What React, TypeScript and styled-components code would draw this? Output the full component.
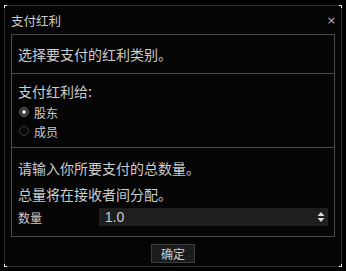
import React from "react";
import styled, { createGlobalStyle } from "styled-components";

const Global = createGlobalStyle`
  html, body { margin: 0; padding: 0; background: #000; }
  body { font-family: "Noto Sans CJK SC", "Noto Sans", sans-serif; color: #cfcfcf; }
`;

const Dialog = styled.div`
  position: relative;
  margin: 5px 0 0 4px;
  width: 338px;
  height: 262px;
  box-sizing: border-box;
  border: 1px solid #2e2e2e;
  background: #050505;
  display: flex;
  flex-direction: column;
`;

const Corner = styled.span<{ $pos: "tl" | "tr" | "bl" | "br" }>`
  position: absolute;
  width: 3px;
  height: 3px;
  ${({ $pos }) => ($pos.includes("t") ? "top: -1px;" : "bottom: -1px;")}
  ${({ $pos }) => ($pos.includes("l") ? "left: -1px;" : "right: -1px;")}
  ${({ $pos }) =>
    `border-${$pos.includes("t") ? "top" : "bottom"}: 1px solid #e6e6e6; border-${
      $pos.includes("l") ? "left" : "right"
    }: 1px solid #e6e6e6;`}
  box-sizing: border-box;
`;

const TitleBar = styled.div`
  height: 28px;
  display: flex;
  align-items: center;
  justify-content: space-between;
  padding: 0 6px 0 6px;
  font-size: 12.5px;
  color: #cfcfcf;
`;

const Close = styled.span`
  font-size: 11px;
  color: #bbb;
  margin-right: -1px;
  font-family: "DejaVu Sans", sans-serif;
`;

const Panel = styled.div`
  margin: 0 6px;
  border: 1px solid #4a4a4a;
  display: flex;
  flex-direction: column;
`;

const Section = styled.div<{ $h: number }>`
  height: ${({ $h }) => $h}px;
  box-sizing: border-box;
  padding: 0 6px;
  display: flex;
  flex-direction: column;
  justify-content: center;
  & + & {
    border-top: 1px solid #4a4a4a;
  }
`;

const Big = styled.div<{ $gap?: number }>`
  font-size: 14px;
  line-height: 20px;
  color: #cccccc;
  margin-bottom: ${({ $gap }) => $gap ?? 0}px;
`;

const Radios = styled.div`
  display: flex;
  flex-direction: column;
  padding-left: 1px;
  margin-top: 2px;
`;

const RadioRow = styled.div`
  display: flex;
  align-items: center;
  height: 19px;
  font-size: 12px;
  color: #cccccc;
`;

const Dot = styled.span<{ $on?: boolean }>`
  width: 10px;
  height: 10px;
  border-radius: 50%;
  box-sizing: border-box;
  border: 1px solid ${({ $on }) => ($on ? "#6a6a6a" : "#3a3a3a")};
  background: ${({ $on }) => ($on ? "#2a2a2a" : "#080808")};
  margin-right: 5px;
  display: flex;
  align-items: center;
  justify-content: center;
  &::after {
    content: "";
    display: ${({ $on }) => ($on ? "block" : "none")};
    width: 4px;
    height: 4px;
    border-radius: 50%;
    background: #f0f0f0;
  }
`;

const FieldRow = styled.div`
  display: flex;
  align-items: center;
  margin-top: 4px;
`;

const FieldLabel = styled.span`
  width: 81px;
  font-size: 12px;
  color: #cccccc;
`;

const NumBox = styled.div`
  width: 230px;
  height: 18px;
  background: #1e1e1e;
  display: flex;
  align-items: center;
  justify-content: space-between;
  padding: 0 3px 0 6px;
  box-sizing: border-box;
  font-family: "Liberation Sans", sans-serif;
  font-size: 14px;
  color: #cccccc;
`;

const Spin = styled.svg`
  display: block;
`;

const Footer = styled.div`
  flex: 1;
  display: flex;
  align-items: center;
  justify-content: center;
  padding-top: 3px;
`;

const Button = styled.button`
  width: 44px;
  height: 19px;
  background: #1c1c1c;
  border: 1px solid #3c3c3c;
  color: #cccccc;
  font-family: "Noto Sans CJK SC", sans-serif;
  font-size: 12px;
  padding: 0;
  line-height: 17px;
`;

export default function App() {
  return (
    <>
      <Global />
      <Dialog>
        <Corner $pos="tl" />
        <Corner $pos="tr" />
        <Corner $pos="bl" />
        <Corner $pos="br" />
        <TitleBar>
          <span>支付红利</span>
          <Close>×</Close>
        </TitleBar>
        <Panel>
          <Section $h={38}>
            <Big>选择要支付的红利类别。</Big>
          </Section>
          <Section $h={74}>
            <Big>支付红利给:</Big>
            <Radios>
              <RadioRow>
                <Dot $on />
                股东
              </RadioRow>
              <RadioRow>
                <Dot />
                成员
              </RadioRow>
            </Radios>
          </Section>
          <Section $h={89}>
            <Big $gap={6}>请输入你所要支付的总数量。</Big>
            <Big>总量将在接收者间分配。</Big>
            <FieldRow>
              <FieldLabel>数量</FieldLabel>
              <NumBox>
                <span>1.0</span>
                <Spin width="8" height="12" viewBox="0 0 8 12">
                  <path d="M4 1 L7.5 5 L0.5 5 Z" fill="#d8d8d8" />
                  <path d="M4 11 L7.5 7 L0.5 7 Z" fill="#d8d8d8" />
                </Spin>
              </NumBox>
            </FieldRow>
          </Section>
        </Panel>
        <Footer>
          <Button>确定</Button>
        </Footer>
      </Dialog>
    </>
  );
}
